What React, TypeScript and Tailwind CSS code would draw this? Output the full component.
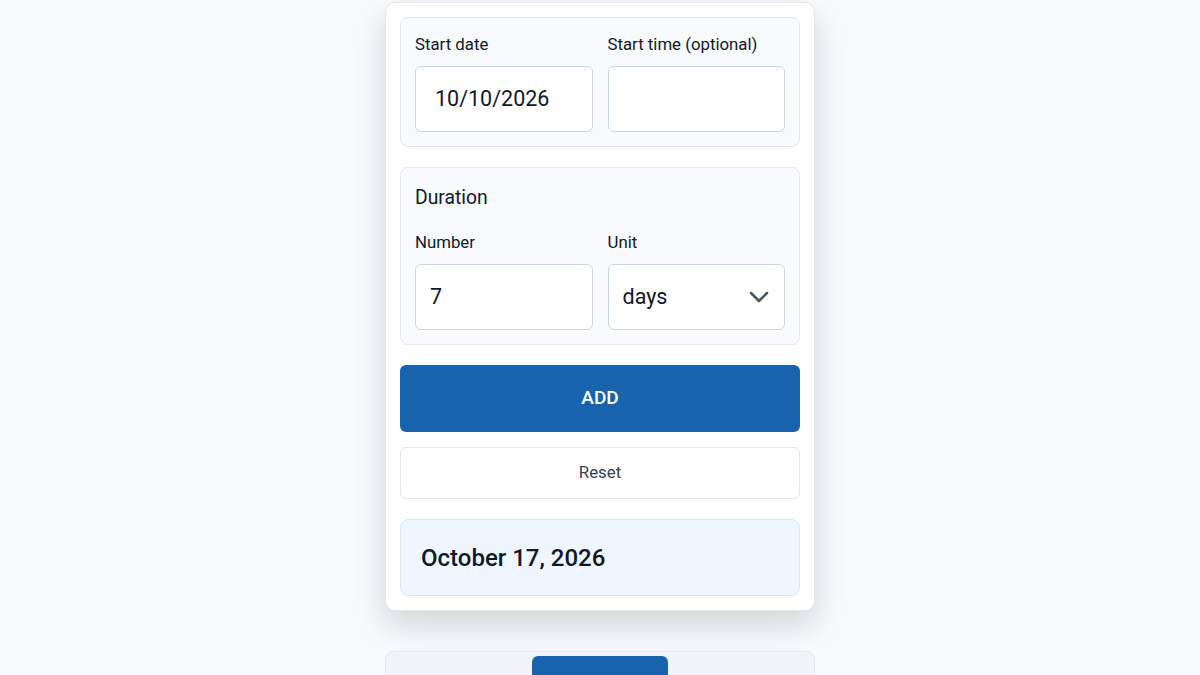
import { ChevronDown } from "lucide-react";

export default function App() {
  return (
    <div className="min-h-[675px] bg-[#f8fafc] font-['Roboto',sans-serif] text-[#111827] overflow-hidden">
      <div className="mx-auto w-[430px] pt-[2px]">
        <div className="rounded-[10px] border border-[#e5e7eb] bg-white p-[14px] shadow-[0_14px_32px_rgba(15,23,42,0.16)]">
          <div className="rounded-lg border border-[#e2e8f0] bg-[#f8fafc] p-[14px]">
            <div className="grid grid-cols-2 gap-[15px]">
              <div>
                <div className="h-6 text-[16.8px] leading-6">Start date</div>
                <div className="mt-[10px] flex h-[66px] items-center rounded-md border border-[#cbd5e1] bg-white pl-[19px] text-[21.5px]">
                  10/10/2026
                </div>
              </div>
              <div>
                <div className="h-6 text-[16.8px] leading-6">Start time (optional)</div>
                <div className="mt-[10px] h-[66px] rounded-md border border-[#cbd5e1] bg-white" />
              </div>
            </div>
          </div>

          <div className="mt-5 rounded-lg border border-[#e2e8f0] bg-[#f8fafc] p-[14px]">
            <div className="h-7 pt-[2px] text-[19.3px] leading-7">Duration</div>
            <div className="mt-5 grid grid-cols-2 gap-[15px]">
              <div>
                <div className="h-6 text-[16.8px] leading-6">Number</div>
                <div className="mt-[10px] flex h-[66px] items-center rounded-md border border-[#cbd5e1] bg-white pl-[14px] text-[21.5px]">
                  7
                </div>
              </div>
              <div>
                <div className="h-6 text-[16.8px] leading-6">Unit</div>
                <div className="mt-[10px] flex h-[66px] items-center justify-between rounded-md border border-[#cbd5e1] bg-white pl-[14px] pr-[9px] text-[21.5px]">
                  <span>days</span>
                  <ChevronDown size={32} className="text-[#4b5563]" strokeWidth={1.9} />
                </div>
              </div>
            </div>
          </div>

          <button className="mt-5 flex h-[67px] w-full items-center justify-center rounded-md bg-[#1763ad] text-[19px] font-medium text-white">
            ADD
          </button>
          <button className="mt-[15px] flex h-[52px] w-full items-center justify-center rounded-md border border-[#e2e8f0] bg-white text-[16.8px] text-[#374151]">
            Reset
          </button>

          <div className="mt-5 flex h-[77px] items-center rounded-lg border border-[#dbe7f7] bg-[#eff6ff] px-5 text-[24px] font-medium text-[#111827]">
            October 17, 2026
          </div>
        </div>

        <div className="mt-10 flex h-[40px] justify-center rounded-t-lg border border-[#e2e8f0] bg-[#f1f5f9] pt-[4px]">
          <div className="w-[136px] rounded-t-md bg-[#1763ad]" />
        </div>
      </div>
    </div>
  );
}
